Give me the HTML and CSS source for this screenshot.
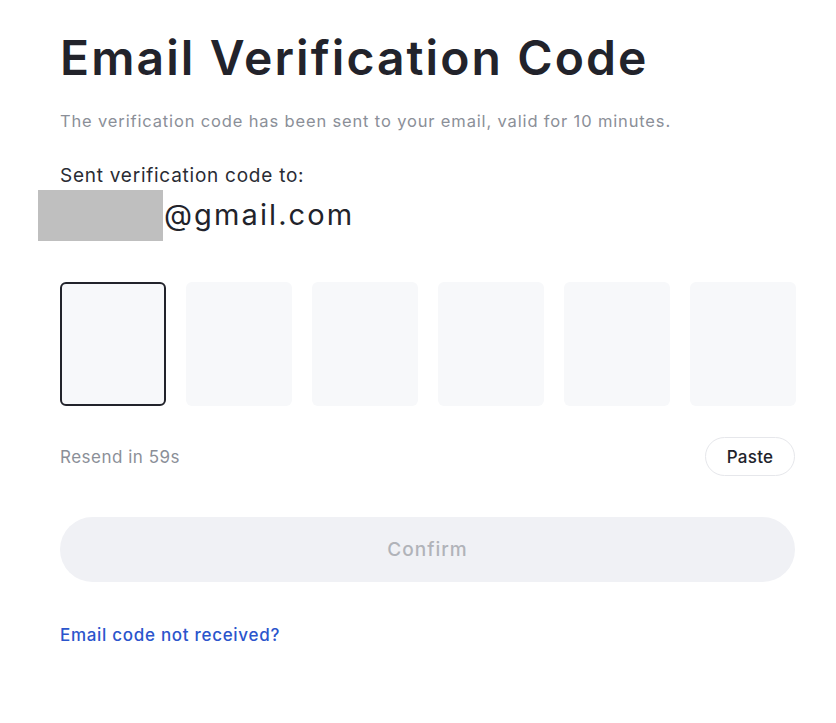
FILE: index.html
```html
<!DOCTYPE html>
<html lang="en">
<head>
<meta charset="utf-8">
<title>Email Verification Code</title>
<link rel="stylesheet" href="styles.css">
</head>
<body>
<main class="page">
  <h1 class="title">Email Verification Code</h1>
  <p class="subtitle">The verification code has been sent to your email, valid for 10 minutes.</p>
  <p class="sent-label">Sent verification code to:</p>
  <div class="email-row">
    <span class="redact"></span><span class="email">@gmail.com</span>
  </div>
  <div class="code-row">
    <div class="code-box active"></div>
    <div class="code-box"></div>
    <div class="code-box"></div>
    <div class="code-box"></div>
    <div class="code-box"></div>
    <div class="code-box"></div>
  </div>
  <div class="resend-row">
    <span class="resend">Resend in 59s</span>
    <button class="paste" type="button">Paste</button>
  </div>
  <button class="confirm" type="button">Confirm</button>
  <a class="help-link" href="#">Email code not received?</a>
</main>
</body>
</html>
```

FILE: styles.css
```css
* { box-sizing: border-box; }
html, body { margin: 0; padding: 0; background: #ffffff; }
body {
  font-family: "Inter", "Noto Sans", "Liberation Sans", sans-serif;
  color: #23252d;
}
.page {
  width: 735px;
  margin-left: 60px;
  padding-top: 26px;
  display: flex;
  flex-direction: column;
}
.title {
  margin: 0;
  font-size: 48px;
  font-weight: 600;
  line-height: 64px;
  letter-spacing: 2.1px;
  color: #22232b;
}
.subtitle {
  margin: 19px 0 0;
  font-size: 16.5px;
  line-height: 24px;
  letter-spacing: 0.85px;
  color: #8b8f98;
}
.sent-label {
  margin: 30px 0 0;
  font-size: 19px;
  line-height: 26px;
  letter-spacing: 0.75px;
  color: #2a2c34;
}
.email-row {
  display: flex;
  align-items: center;
  margin-left: -22px;
  height: 52px;
}
.redact {
  width: 125px;
  height: 51px;
  background: #bfbfbf;
}
.email {
  margin-left: 1px;
  font-size: 29px;
  line-height: 36px;
  letter-spacing: 2.1px;
  color: #22232b;
}
.code-row {
  margin-top: 41px;
  display: flex;
  gap: 20px;
  width: 737px;
}
.code-box {
  width: 106px;
  height: 124px;
  border-radius: 6px;
  background: #f7f8fa;
  flex: none;
}
.code-box.active {
  border: 2px solid #22232b;
}
.resend-row {
  margin-top: 31px;
  display: flex;
  align-items: center;
  justify-content: space-between;
}
.resend {
  font-size: 17px;
  letter-spacing: 0.5px;
  color: #8b8f98;
}
.paste {
  width: 90px;
  height: 39px;
  border: 1px solid #e6e7eb;
  border-radius: 20px;
  background: #ffffff;
  font-family: inherit;
  font-size: 17px;
  font-weight: 500;
  letter-spacing: 0.3px;
  color: #22232b;
  padding: 0;
}
.confirm {
  margin-top: 41px;
  height: 65px;
  width: 100%;
  border: none;
  border-radius: 33px;
  background: #f0f1f5;
  font-family: inherit;
  font-size: 19px;
  font-weight: 500;
  letter-spacing: 1px;
  color: #b1b3b9;
}
.help-link {
  margin-top: 43px;
  align-self: flex-start;
  font-size: 17px;
  font-weight: 500;
  letter-spacing: 0.7px;
  color: #2b55cc;
  text-decoration: none;
}
```
